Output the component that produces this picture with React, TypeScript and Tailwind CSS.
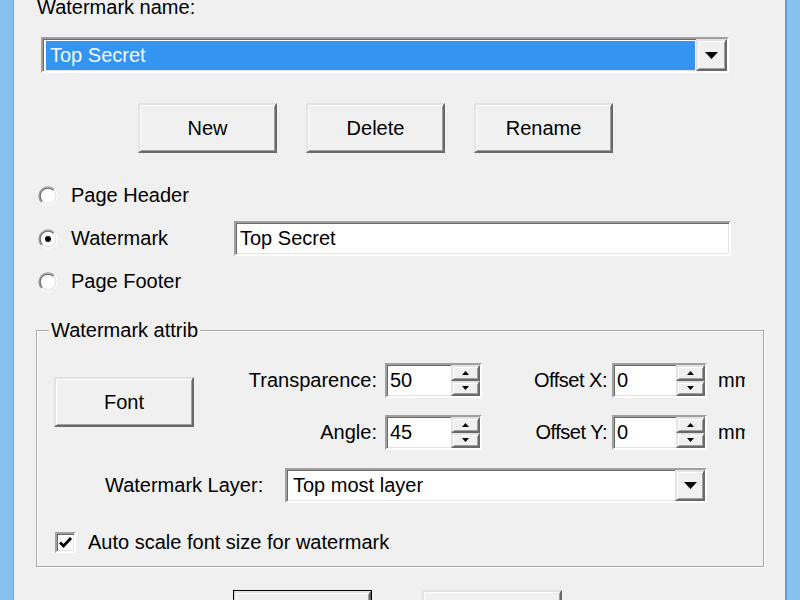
import React from "react";

const FONT = { fontFamily: '"Liberation Sans", Arial, sans-serif' };

const sunken =
  "border-2 border-t-[#a0a0a0] border-l-[#a0a0a0] border-b-white border-r-white shadow-[inset_1px_1px_0_#696969,inset_-1px_-1px_0_#e3e3e3]";
const raised =
  "border-2 border-t-[#e3e3e3] border-l-[#e3e3e3] border-b-[#696969] border-r-[#696969] shadow-[inset_1px_1px_0_#ffffff,inset_-1px_-1px_0_#a0a0a0] bg-[#f0f0f0]";

function Button({ label, w = 139, isDefault = false }: { label: string; w?: number; isDefault?: boolean }) {
  const inner = (
    <div
      className={`${raised} h-[50px] shrink-0 flex items-center justify-center text-[20px] leading-[23px] text-black`}
      style={{ width: isDefault ? w - 2 : w, height: isDefault ? 48 : 50 }}
    >
      {label}
    </div>
  );
  if (isDefault) return <div className="border border-black shrink-0">{inner}</div>;
  return inner;
}

function DownArrow({ w = 13, h = 7 }: { w?: number; h?: number }) {
  return (
    <svg width={w} height={h} viewBox={`0 0 ${w} ${h}`}>
      <polygon points={`0,0 ${w},0 ${w / 2},${h}`} fill="#000" />
    </svg>
  );
}

function UpArrow({ w = 7, h = 4 }: { w?: number; h?: number }) {
  return (
    <svg width={w} height={h} viewBox={`0 0 ${w} ${h}`}>
      <polygon points={`0,${h} ${w},${h} ${w / 2},0`} fill="#000" />
    </svg>
  );
}

function Radio({ checked }: { checked?: boolean }) {
  return (
    <svg width="20" height="20" viewBox="0 0 20 20" className="shrink-0">
      <circle cx="10" cy="10" r="9" fill="#fff" />
      <path d="M3.6 16.4 A9 9 0 0 1 16.4 3.6" stroke="#a0a0a0" strokeWidth="1.3" fill="none" />
      <path d="M4.4 15.6 A7.9 7.9 0 0 1 15.6 4.4" stroke="#696969" strokeWidth="1.3" fill="none" />
      <path d="M16.4 3.6 A9 9 0 0 1 3.6 16.4" stroke="#ffffff" strokeWidth="1.3" fill="none" />
      <path d="M15.6 4.4 A7.9 7.9 0 0 1 4.4 15.6" stroke="#e3e3e3" strokeWidth="1.3" fill="none" />
      {checked && <circle cx="10" cy="10" r="3" fill="#000" />}
    </svg>
  );
}

function Spinner({ value, w }: { value: string; w: number }) {
  return (
    <div className={`${sunken} h-[35px] shrink-0 flex bg-white`} style={{ width: w }}>
      <div className="flex-1 flex items-center pl-[3px] text-[20px] leading-[23px] text-black">{value}</div>
      <div className="w-[29px] flex flex-col">
        <div className={`${raised} flex-1 flex items-center justify-center`}>
          <UpArrow />
        </div>
        <div className={`${raised} flex-1 flex items-center justify-center`}>
          <DownArrow w={7} h={4} />
        </div>
      </div>
    </div>
  );
}

function SpinRow({ label, value, offLabel }: { label: string; value: string; offLabel: string }) {
  return (
    <div className="flex items-center h-[35px]">
      <div className="w-[183px] shrink-0 mr-[8px] text-right whitespace-nowrap">{label}</div>
      <Spinner value={value} w={97} />
      <div className="w-[125px] shrink-0 mr-[5px] text-right whitespace-nowrap tracking-[-0.5px]">{offLabel}</div>
      <Spinner value="0" w={95} />
      <div className="ml-[11px] w-[27px] shrink-0 overflow-hidden whitespace-nowrap">mm</div>
    </div>
  );
}

export default function App() {
  return (
    <div
      className="w-[800px] h-[600px] overflow-hidden flex bg-[#f0f0f0] text-black text-[20px] leading-[23px]"
      style={FONT}
    >
      {/* window frame, left */}
      <div className="w-[14px] h-full shrink-0 bg-[#86c1f0] border-r border-r-[#6aa6dc]" />

      <div className="flex-1 flex flex-col [&>*]:shrink-0">
        <div className="mt-[-4px] ml-[23px]">Watermark name:</div>

        {/* name combo */}
        <div className={`${sunken} mt-[18px] ml-[27px] w-[688px] h-[36px] flex bg-white`}>
          <div className="flex-1 mt-[2px] mb-[1px] ml-[3px] mr-[1px] bg-[#3394f2] text-[#f4faff] flex items-center pl-[4px]">
            Top Secret
          </div>
          <div className={`${raised} w-[31px] flex items-center justify-center`}>
            <DownArrow />
          </div>
        </div>

        {/* action buttons */}
        <div className="mt-[30px] ml-[124px] flex gap-[29px]">
          <Button label="New" />
          <Button label="Delete" />
          <Button label="Rename" />
        </div>

        {/* placement */}
        <div className="mt-[21px] ml-[24px] flex flex-col">
          <div className="h-[43px] flex items-center">
            <Radio />
            <span className="ml-[13px]">Page Header</span>
          </div>
          <div className="h-[43px] flex items-center">
            <Radio checked />
            <span className="ml-[13px] w-[163px]">Watermark</span>
            <div className={`${sunken} w-[497px] h-[35px] bg-white flex items-center pl-[4px]`}>Top Secret</div>
          </div>
          <div className="h-[43px] flex items-center">
            <Radio />
            <span className="ml-[13px]">Page Footer</span>
          </div>
        </div>

        {/* attributes group */}
        <fieldset className="mt-[16px] ml-[22px] w-[728px] border border-[#a8a8a8] shadow-[inset_1px_1px_0_#ffffff,1px_1px_0_#ffffff] pt-[21px] pb-[13px]">
          <legend className="ml-[12px] px-[2px] bg-[#f0f0f0] leading-[23px]">Watermark attrib</legend>

          <div className="flex">
            <div className="ml-[17px] mt-[14px] self-start">
              <Button label="Font" w={140} />
            </div>
            <div className="flex flex-col gap-[17px]">
              <SpinRow label="Transparence:" value="50" offLabel="Offset X:" />
              <SpinRow label="Angle:" value="45" offLabel="Offset Y:" />
            </div>
          </div>

          <div className="mt-[18px] ml-[68px] flex items-center h-[35px]">
            <div className="w-[180px] shrink-0 whitespace-nowrap">Watermark Layer:</div>
            <div className={`${sunken} w-[422px] h-[35px] shrink-0 bg-white flex`}>
              <div className="flex-1 flex items-center pl-[6px]">Top most layer</div>
              <div className={`${raised} w-[30px] flex items-center justify-center`}>
                <DownArrow />
              </div>
            </div>
          </div>

          <div className="mt-[29px] ml-[18px] flex items-center h-[21px]">
            <div className={`${sunken} w-[21px] h-[21px] shrink-0 bg-white flex items-center justify-center`}>
              <svg width="15" height="13" viewBox="0 0 15 13">
                <path d="M2 6.5 L5.5 10 L13 2" stroke="#000" strokeWidth="2.8" fill="none" />
              </svg>
            </div>
            <span className="ml-[12px]">Auto scale font size for watermark</span>
          </div>
        </fieldset>

        {/* dialog buttons */}
        <div className="mt-[23px] ml-[219px] flex gap-[50px]">
          <Button label="OK" isDefault />
          <Button label="Cancel" w={140} />
        </div>
      </div>

      {/* window frame, right */}
      <div className="w-[15px] h-full shrink-0 bg-[#86c1f0] border-l-2 border-l-[#5f9fd9]" />
    </div>
  );
}
